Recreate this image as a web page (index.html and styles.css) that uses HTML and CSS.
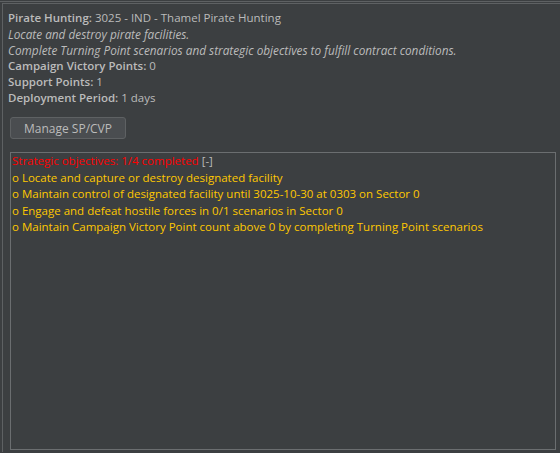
FILE: index.html
```
<!DOCTYPE html>
<html>
<head>
<meta charset="utf-8">
<link rel="stylesheet" href="styles.css">
</head>
<body>
<div class="tabframe">
  <div class="pane">
    <div class="info">
      <div class="line"><b>Pirate Hunting:</b> 3025 - IND - Thamel Pirate Hunting</div>
      <div class="line"><i>Locate and destroy pirate facilities.</i></div>
      <div class="line"><i>Complete Turning Point scenarios and strategic objectives to fulfill contract conditions.</i></div>
      <div class="line"><b>Campaign Victory Points:</b> 0</div>
      <div class="line"><b>Support Points:</b> 1</div>
      <div class="line"><b>Deployment Period:</b> 1 days</div>
    </div>
    <button class="btn">Manage SP/CVP</button>
    <div class="objectives">
      <div class="oline"><span class="red">Strategic objectives: 1/4 completed</span> <span class="toggle">[-]</span></div>
      <div class="oline yellow">o Locate and capture or destroy designated facility</div>
      <div class="oline yellow">o Maintain control of designated facility until 3025-10-30 at 0303 on Sector 0</div>
      <div class="oline yellow">o Engage and defeat hostile forces in 0/1 scenarios in Sector 0</div>
      <div class="oline yellow">o Maintain Campaign Victory Point count above 0 by completing Turning Point scenarios</div>
    </div>
  </div>
</div>
</body>
</html>
```
FILE: styles.css
```
html, body {
  margin: 0;
  padding: 0;
  background: #3c3f41;
  width: 560px;
  height: 453px;
  overflow: hidden;
}
body {
  font-family: "Open Sans", "Noto Sans", sans-serif;
  font-size: 11.5px;
  color: #bbbbbb;
}
.tabframe {
  margin-top: 1px;
  border-top: 1px solid #5e6163;
  height: 451px;
}
.pane {
  margin-top: 1px;
  margin-left: 2px;
  width: 558px;
  height: 449px;
  border-top: 1px solid #5e6163;
  border-left: 1px solid #5e6163;
  box-sizing: border-box;
  padding: 6px 0 0 5px;
}
.info .line {
  height: 16px;
  line-height: 16px;
  white-space: nowrap;
}
.info b { font-weight: 600; }
.info i { font-size: 11.8px; }
.btn {
  display: block;
  margin: 11px 0 0 2px;
  width: 116px;
  height: 22px;
  background: #4a4d50;
  border: 1px solid #5e6163;
  border-radius: 3px;
  color: #bbbbbb;
  font-family: inherit;
  font-size: 12px;
  padding: 0;
}
.objectives {
  margin: 13px 0 0 2px;
  width: 546px;
  height: 298px;
  border: 1px solid #6b6e70;
  box-sizing: border-box;
  padding: 0 0 0 1px;
}
.oline {
  height: 16.5px;
  line-height: 16.5px;
  white-space: nowrap;
}
.red { color: #ff0000; }
.toggle { color: #bbbbbb; }
.yellow { color: #ffc800; }
```
